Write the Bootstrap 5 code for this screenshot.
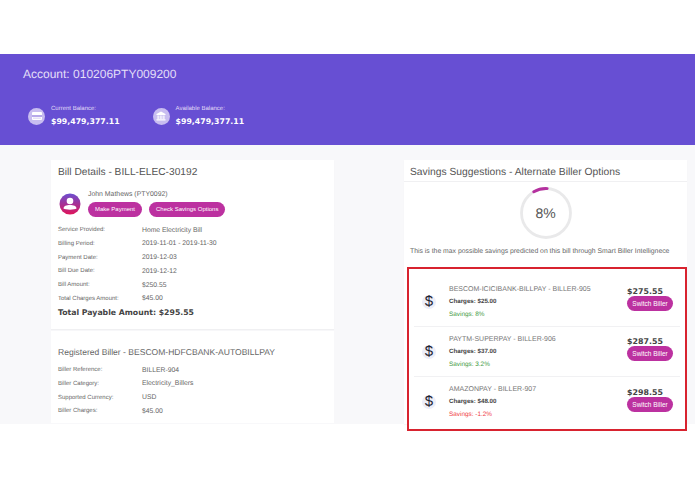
<!DOCTYPE html>
<html lang="en">
<head>
<meta charset="utf-8">
<title>Bill Details</title>
<link rel="stylesheet" href="https://cdn.jsdelivr.net/npm/bootstrap@5.3.0/dist/css/bootstrap.min.css">
<style>
html,body{height:494px;overflow:hidden}
body{background:#fff;font-family:"Liberation Sans",Arial,sans-serif;color:#555;padding-top:54px;text-rendering:geometricPrecision}
.bold-face{font-family:"DejaVu Sans",Verdana,sans-serif;font-weight:700}
.acct-band{height:91px;background:#674fd3;color:#fff;padding:13px 23px 0}
.acct-title{font-size:12px;line-height:15px;color:#e4dff8;margin:0 0 23px}
.bal-list{padding-left:5px;gap:33px}
.bal-icon{width:17px;height:17px;border-radius:50%;background:#c8bdf0;flex:none;margin-right:6px}
.bal-label{font-size:6px;line-height:8px;color:#e2ddf7}
.bal-value{font-size:7.8px;line-height:11px;margin-top:3px;color:#fff}
.body-band{height:279px;background:#f8f8fa;position:relative;padding:15px 8px 0 51px;gap:70px}
.side{width:283px;flex:none}
.pane{background:#fff;border-radius:0;border:0;box-shadow:0 1px 1px rgba(0,0,0,.03)}
.bill-head{height:65px;padding:6px 7px 0;margin-bottom:1px}
.pane-title{font-size:10.2px;line-height:14px;color:#555;font-weight:400;margin:0}
.who{margin-top:10px;padding-left:1px;gap:7px}
.who-name{font-size:6.9px;line-height:9px;color:#666;margin-bottom:3px}
.pill-btn{--bs-btn-bg:#bc31a0;--bs-btn-color:#fff;--bs-btn-border-color:#bc31a0;--bs-btn-hover-bg:#bc31a0;--bs-btn-hover-color:#fff;--bs-btn-padding-x:7px;--bs-btn-padding-y:0;--bs-btn-font-size:6px;--bs-btn-line-height:15px;--bs-btn-border-radius:8px;--bs-btn-border-width:0;white-space:nowrap}
.btn-pair{gap:7px}
.bill-body{height:105px;padding:0 7px}
.bill-body .fact:first-child{margin-top:-2px}
.fact{height:13.7px;align-items:center}
.fact-key{width:84px;font-size:6px;color:#666;flex:none}
.fact-val{font-size:6.8px;color:#666}
.grand{font-size:7.75px;line-height:14px;color:#444}
.biller-pane{margin-top:2px;height:92px;padding:14px 7px 0;box-shadow:none}
.biller-pane .pane-title{margin-bottom:5px;font-size:8.55px;color:#666}
.save-head{height:21px;padding:6px 6px 0;margin-bottom:1px}
.save-head .pane-title{font-size:10.3px}
.save-body{height:242px;padding-top:5px;text-align:center}
.ring-box{width:52px;height:52px;position:relative;margin:0 auto}
.ring-text{font-size:14px;color:#555;line-height:52px}
.ring-box svg{position:absolute;left:0;top:0}
.save-note{font-size:6.85px;line-height:9px;color:#666;text-align:left;padding-left:6px;margin-top:8px}
.redbox{position:absolute;left:407px;top:122px;width:280px;height:164px;border:2px solid #d8232f;background:#fff;padding:0 5px}
.opt{height:50px;border-bottom:1px solid #f1f1f3}
.opt:first-child{height:58px;padding-top:8px}
.opt:last-child{border-bottom:0}
.usd{width:14px;height:14px;border-radius:50%;background:#edeef8;flex:none;margin-left:8px;margin-right:13px;font-size:15px;line-height:14px;text-align:center;color:#1d2230}
.opt-name{font-size:7px;line-height:9px;color:#777}
.opt-charge{font-size:6.2px;line-height:8px;font-weight:700;color:#444;margin-top:4px}
.opt-save{font-size:6.4px;line-height:8px;margin-top:5px}
.gain{color:#3f9a3f}
.loss{color:#ef3b45}
.opt-price{font-size:7.9px;line-height:9px;color:#444}
.opt-right{width:47px;margin-right:6px;margin-bottom:5px;flex:none}
.swap-btn{--bs-btn-line-height:15px;--bs-btn-padding-x:0;--bs-btn-font-size:6.5px;width:46px;display:block;text-align:center}
</style>
</head>
<body>
<header class="acct-band">
  <h1 class="acct-title fw-normal">Account: 010206PTY009200</h1>
  <div class="d-flex bal-list">
    <div class="d-flex align-items-center">
      <span class="bal-icon d-flex align-items-center justify-content-center"><svg width="10" height="8" viewBox="0 0 10 8"><rect x="0" y="0" width="10" height="8" rx="1" fill="#fff"/><rect x="0" y="3" width="10" height="2" fill="#b7a9ea"/><rect x="1" y="5.5" width="8" height="1.5" fill="#e6e0f8"/></svg></span>
      <div><div class="bal-label">Current Balance:</div><div class="bal-value bold-face">$99,479,377.11</div></div>
    </div>
    <div class="d-flex align-items-center">
      <span class="bal-icon d-flex align-items-center justify-content-center"><svg width="10" height="10" viewBox="0 0 10 10"><path d="M5 .5 9.5 3v1h-9V3z" fill="#fff"/><path d="M1.5 4.5h1.2v3.5H1.5zM3.7 4.5h1v3.5h-1zM5.4 4.5h1v3.5h-1zM7.3 4.5h1.2v3.5H7.300zM.5 8.300h9v1.200h-9z" fill="#fff"/></svg></span>
      <div><div class="bal-label">Available Balance:</div><div class="bal-value bold-face">$99,479,377.11</div></div>
    </div>
  </div>
</header>
<main class="body-band d-flex">
  <section class="side">
    <div class="pane bill-head">
      <h2 class="pane-title">Bill Details - BILL-ELEC-30192</h2>
      <div class="d-flex who align-items-center">
        <svg width="22" height="22" viewBox="0 0 22 22"><defs><linearGradient id="pg" x1="0" y1="0" x2="0" y2="1"><stop offset="0" stop-color="#6b4fd0"/><stop offset="1" stop-color="#e0145a"/></linearGradient></defs><circle cx="11" cy="11" r="10.500" fill="url(#pg)"/><circle cx="11" cy="8" r="3.300" fill="#fff"/><path d="M4.500 15.500c0-2.500 3-3.500 6.500-3.500s6.500 1 6.500 3.500c-1.500 1.500-11.500 1.500-13 0z" fill="#fff"/></svg>
        <div>
          <div class="who-name">John Mathews (PTY0092)</div>
          <div class="d-flex btn-pair">
            <button class="btn pill-btn" type="button">Make Payment</button>
            <button class="btn pill-btn" type="button">Check Savings Options</button>
          </div>
        </div>
      </div>
    </div>
    <div class="pane bill-body">
      <div class="d-flex fact"><span class="fact-key">Service Provided:</span><span class="fact-val">Home Electricity Bill</span></div>
      <div class="d-flex fact"><span class="fact-key">Billing Period:</span><span class="fact-val">2019-11-01 - 2019-11-30</span></div>
      <div class="d-flex fact"><span class="fact-key">Payment Date:</span><span class="fact-val">2019-12-03</span></div>
      <div class="d-flex fact"><span class="fact-key">Bill Due Date:</span><span class="fact-val">2019-12-12</span></div>
      <div class="d-flex fact"><span class="fact-key">Bill Amount:</span><span class="fact-val">$250.55</span></div>
      <div class="d-flex fact"><span class="fact-key">Total Charges Amount:</span><span class="fact-val">$45.00</span></div>
      <div class="grand bold-face">Total Payable Amount: $295.55</div>
    </div>
    <div class="pane biller-pane">
      <h2 class="pane-title">Registered Biller - BESCOM-HDFCBANK-AUTOBILLPAY</h2>
      <div class="d-flex fact"><span class="fact-key">Biller Reference:</span><span class="fact-val">BILLER-904</span></div>
      <div class="d-flex fact"><span class="fact-key">Biller Category:</span><span class="fact-val">Electricity_Billers</span></div>
      <div class="d-flex fact"><span class="fact-key">Supported Currency:</span><span class="fact-val">USD</span></div>
      <div class="d-flex fact"><span class="fact-key">Biller Charges:</span><span class="fact-val">$45.00</span></div>
    </div>
  </section>
  <section class="side">
    <div class="pane save-head"><h2 class="pane-title">Savings Suggestions - Alternate Biller Options</h2></div>
    <div class="pane save-body">
      <div class="ring-box">
        <svg width="52" height="52" viewBox="0 0 52 52"><circle cx="26" cy="26" r="24.500" fill="none" stroke="#e9e9ea" stroke-width="2.800"/><circle cx="26" cy="26" r="24.500" fill="none" stroke="#b5309f" stroke-width="2.800" stroke-linecap="round" stroke-dasharray="14 160" transform="rotate(-120 26 26)"/></svg>
        <div class="ring-text">8%</div>
      </div>
      <p class="save-note mb-0">This is the max possible savings predicted on this bill through Smart Biller Intellignece</p>
    </div>
  </section>
  <div class="redbox">
    <div class="d-flex align-items-center opt">
      <span class="usd">$</span>
      <div class="flex-grow-1"><div class="opt-name">BESCOM-ICICIBANK-BILLPAY - BILLER-905</div><div class="opt-charge">Charges: $25.00</div><div class="opt-save gain">Savings: 8%</div></div>
      <div class="opt-right"><div class="opt-price bold-face">$275.55</div><button class="btn pill-btn swap-btn" type="button">Switch Biller</button></div>
    </div>
    <div class="d-flex align-items-center opt">
      <span class="usd">$</span>
      <div class="flex-grow-1"><div class="opt-name">PAYTM-SUPERPAY - BILLER-906</div><div class="opt-charge">Charges: $37.00</div><div class="opt-save gain">Savings: 3.2%</div></div>
      <div class="opt-right"><div class="opt-price bold-face">$287.55</div><button class="btn pill-btn swap-btn" type="button">Switch Biller</button></div>
    </div>
    <div class="d-flex align-items-center opt">
      <span class="usd">$</span>
      <div class="flex-grow-1"><div class="opt-name">AMAZONPAY - BILLER-907</div><div class="opt-charge">Charges: $48.00</div><div class="opt-save loss">Savings: -1.2%</div></div>
      <div class="opt-right"><div class="opt-price bold-face">$298.55</div><button class="btn pill-btn swap-btn" type="button">Switch Biller</button></div>
    </div>
  </div>
</main>
<script src="https://cdn.jsdelivr.net/npm/bootstrap@5.3.0/dist/js/bootstrap.bundle.min.js"></script>
</body>
</html>
